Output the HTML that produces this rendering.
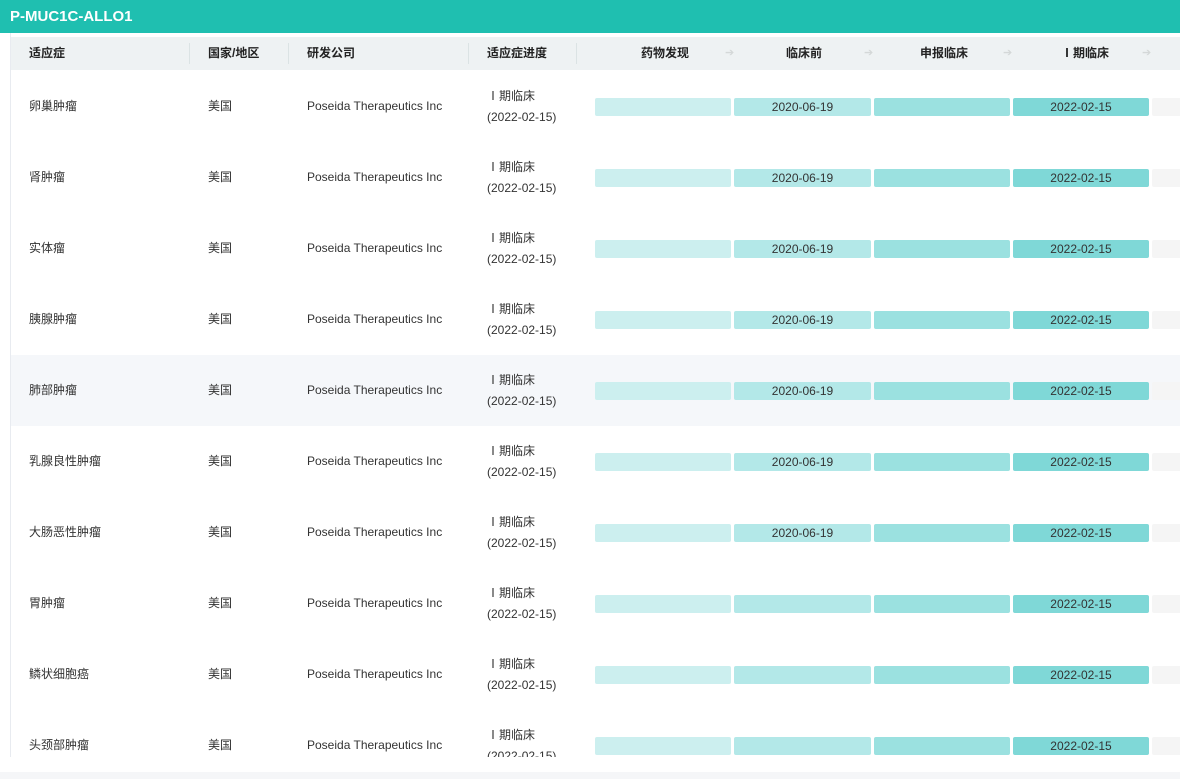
<!DOCTYPE html>
<html><head><meta charset="utf-8"><style>
*{margin:0;padding:0;box-sizing:border-box}
body{width:1180px;height:779px;overflow:hidden;background:#fff;font-family:"Liberation Sans","Noto Sans CJK SC",sans-serif;color:#333;position:relative}
.top{position:absolute;left:0;top:0;width:1180px;height:33px;background:#1fbfb0;color:#fff;font-weight:bold;font-size:15px;line-height:33px;padding-left:10px}
.wrap{position:absolute;left:10px;top:33px;width:1170px;height:724px;overflow:hidden;border-left:1px solid #e8ebf0}
.hd{position:absolute;left:0;top:4px;width:1170px;height:33px;background:#eef2f3;font-size:12px;font-weight:bold;color:#222}
.hd span{position:absolute;top:0;line-height:33px}
.sep{position:absolute;top:6px;width:1px;height:21px;background:#dbe3e4}
.arr{position:absolute;top:0;line-height:33px;color:#d4d8d8;font-size:11px;font-weight:normal}
.row{position:absolute;left:0;width:1170px;height:71px;font-size:12px}
.row.hl{background:#f5f7fa}
.row .t{position:absolute;top:0;line-height:71px}
.st{position:absolute;left:476px;top:15px;line-height:21px}
.b{position:absolute;top:27px;height:18px;border-radius:2px;text-align:center;line-height:18px;font-size:12px;color:#333}
.bottom{position:absolute;left:0;top:772px;width:1180px;height:7px;background:#f5f6f8}
</style></head><body>
<div class="top">P-MUC1C-ALLO1</div>
<div class="wrap">
<div class="hd">
<span style="left:18px">适应症</span><div class="sep" style="left:178px"></div>
<span style="left:197px">国家/地区</span><div class="sep" style="left:277px"></div>
<span style="left:296px">研发公司</span><div class="sep" style="left:457px"></div>
<span style="left:476px">适应症进度</span><div class="sep" style="left:565px"></div>
<span style="left:630px">药物发现</span><span class="arr" style="left:714px">➔</span>
<span style="left:775px">临床前</span><span class="arr" style="left:853px">➔</span>
<span style="left:909px">申报临床</span><span class="arr" style="left:992px">➔</span>
<span style="left:1050px">Ⅰ期临床</span><span class="arr" style="left:1131px">➔</span>
</div>
<div id="rows"></div>
</div>
<div class="bottom"></div>
<script>
var n=["卵巢肿瘤","肾肿瘤","实体瘤","胰腺肿瘤","肺部肿瘤","乳腺良性肿瘤","大肠恶性肿瘤","胃肿瘤","鳞状细胞癌","头颈部肿瘤"];
var h="";
for(var i=0;i<n.length;i++){
var d=i<7?"2020-06-19":"";
h+='<div class="row'+(i==4?' hl':'')+'" style="top:'+(38+i*71)+'px">'+
'<span class="t" style="left:18px">'+n[i]+'</span><span class="t" style="left:197px">美国</span><span class="t" style="left:296px">Poseida Therapeutics Inc</span>'+
'<div class="st">Ⅰ期临床<br>(2022-02-15)</div>'+
'<div class="b" style="left:584px;width:136px;background:#ccefef"></div>'+
'<div class="b" style="left:723px;width:137px;background:#b3e8e8">'+d+'</div>'+
'<div class="b" style="left:863px;width:136px;background:#9be1e0"></div>'+
'<div class="b" style="left:1002px;width:136px;background:#7fd8d7">2022-02-15</div>'+
'<div class="b" style="left:1141px;width:40px;background:#f5f5f5"></div></div>';}
document.getElementById("rows").innerHTML=h;
</script>
</body></html>
